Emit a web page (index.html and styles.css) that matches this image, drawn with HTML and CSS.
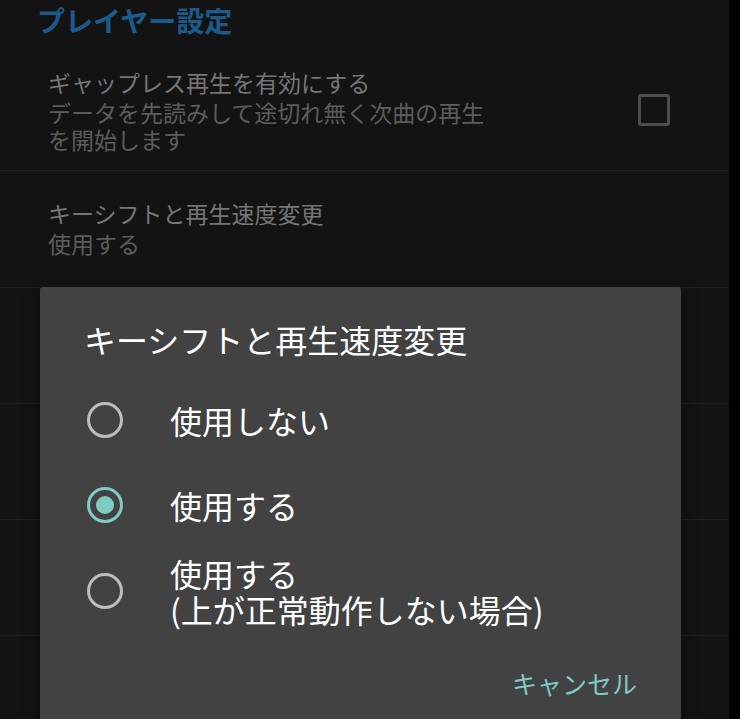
FILE: index.html
```html
<!DOCTYPE html>
<html lang="ja">
<head>
<meta charset="utf-8">
<title>プレイヤー設定</title>
<link rel="stylesheet" href="styles.css">
</head>
<body>
<div class="screen">
  <div class="prefs">
    <div class="category">プレイヤー設定</div>
    <div class="pref pref-check">
      <div class="pref-text">
        <div class="pref-title">ギャップレス再生を有効にする</div>
        <div class="pref-summary">データを先読みして途切れ無く次曲の再生を開始します</div>
      </div>
      <div class="checkbox"></div>
    </div>
    <div class="pref">
      <div class="pref-text">
        <div class="pref-title">キーシフトと再生速度変更</div>
        <div class="pref-summary">使用する</div>
      </div>
    </div>
    <div class="pref pref-empty"></div>
    <div class="pref pref-empty"></div>
    <div class="pref pref-empty"></div>
    <div class="pref pref-empty"></div>
  </div>

  <div class="dialog">
    <div class="dialog-title">キーシフトと再生速度変更</div>
    <div class="options">
      <div class="option">
        <span class="radio"></span>
        <span class="option-label">使用しない</span>
      </div>
      <div class="option">
        <span class="radio radio-on"></span>
        <span class="option-label">使用する</span>
      </div>
      <div class="option">
        <span class="radio"></span>
        <span class="option-label">使用する<br>(上が正常動作しない場合)</span>
      </div>
    </div>
    <div class="actions">
      <span class="btn">キャンセル</span>
    </div>
  </div>
</div>
</body>
</html>
```

FILE: styles.css
```css
html, body {
  margin: 0;
  padding: 0;
  background: #000;
}

body {
  font-family: "Noto Sans CJK JP", "Noto Sans", sans-serif;
}

.screen {
  position: relative;
  width: 729px;
  height: 719px;
  overflow: hidden;
  background: #131313;
}

.category {
  padding-left: 37px;
  height: 40px;
  line-height: 40px;
  font-size: 28px;
  font-weight: 700;
  color: #1b5b8b;
}

.pref {
  display: flex;
  align-items: center;
  padding: 27px 59px 30px 48px;
  border-bottom: 1px solid #212121;
}

.pref-check {
  padding-bottom: 17px;
}

.pref-text {
  width: 445px;
}

.pref-title {
  font-size: 23px;
  line-height: 30px;
  color: #767676;
}

.pref-summary {
  margin-top: 2px;
  font-size: 23px;
  line-height: 27px;
  color: #5c5c5c;
}

.checkbox {
  margin-left: auto;
  width: 26px;
  height: 26px;
  border: 3px solid #4d4d4d;
  border-radius: 3px;
}

.pref-empty {
  height: 116px;
  padding: 0;
  box-sizing: border-box;
}

.dialog {
  position: absolute;
  left: 40px;
  top: 287px;
  width: 641px;
  height: 450px;
  background: #424242;
  border-radius: 3px;
  box-shadow: 0 4px 16px rgba(0, 0, 0, 0.5);
}

.dialog-title {
  padding: 32px 0 0 44px;
  font-size: 32px;
  line-height: 40px;
  color: #ffffff;
}

.options {
  margin-top: 18px;
}

.option {
  display: flex;
  align-items: center;
  gap: 47px;
  min-height: 85px;
  padding: 8px 0 8px 47px;
  box-sizing: border-box;
}

.radio {
  flex: none;
  width: 30px;
  height: 30px;
  border: 3px solid #bdbdbd;
  border-radius: 50%;
  display: flex;
  align-items: center;
  justify-content: center;
}

.radio-on {
  border-color: #80cbc4;
}

.radio-on::after {
  content: "";
  width: 18px;
  height: 18px;
  border-radius: 50%;
  background: #80cbc4;
}

.option-label {
  font-size: 32px;
  line-height: 36px;
  color: #ffffff;
}

.actions {
  display: flex;
  justify-content: flex-end;
  padding: 30px 44px 0 0;
}

.btn {
  font-size: 25px;
  line-height: 36px;
  color: #80cbc4;
}
```
